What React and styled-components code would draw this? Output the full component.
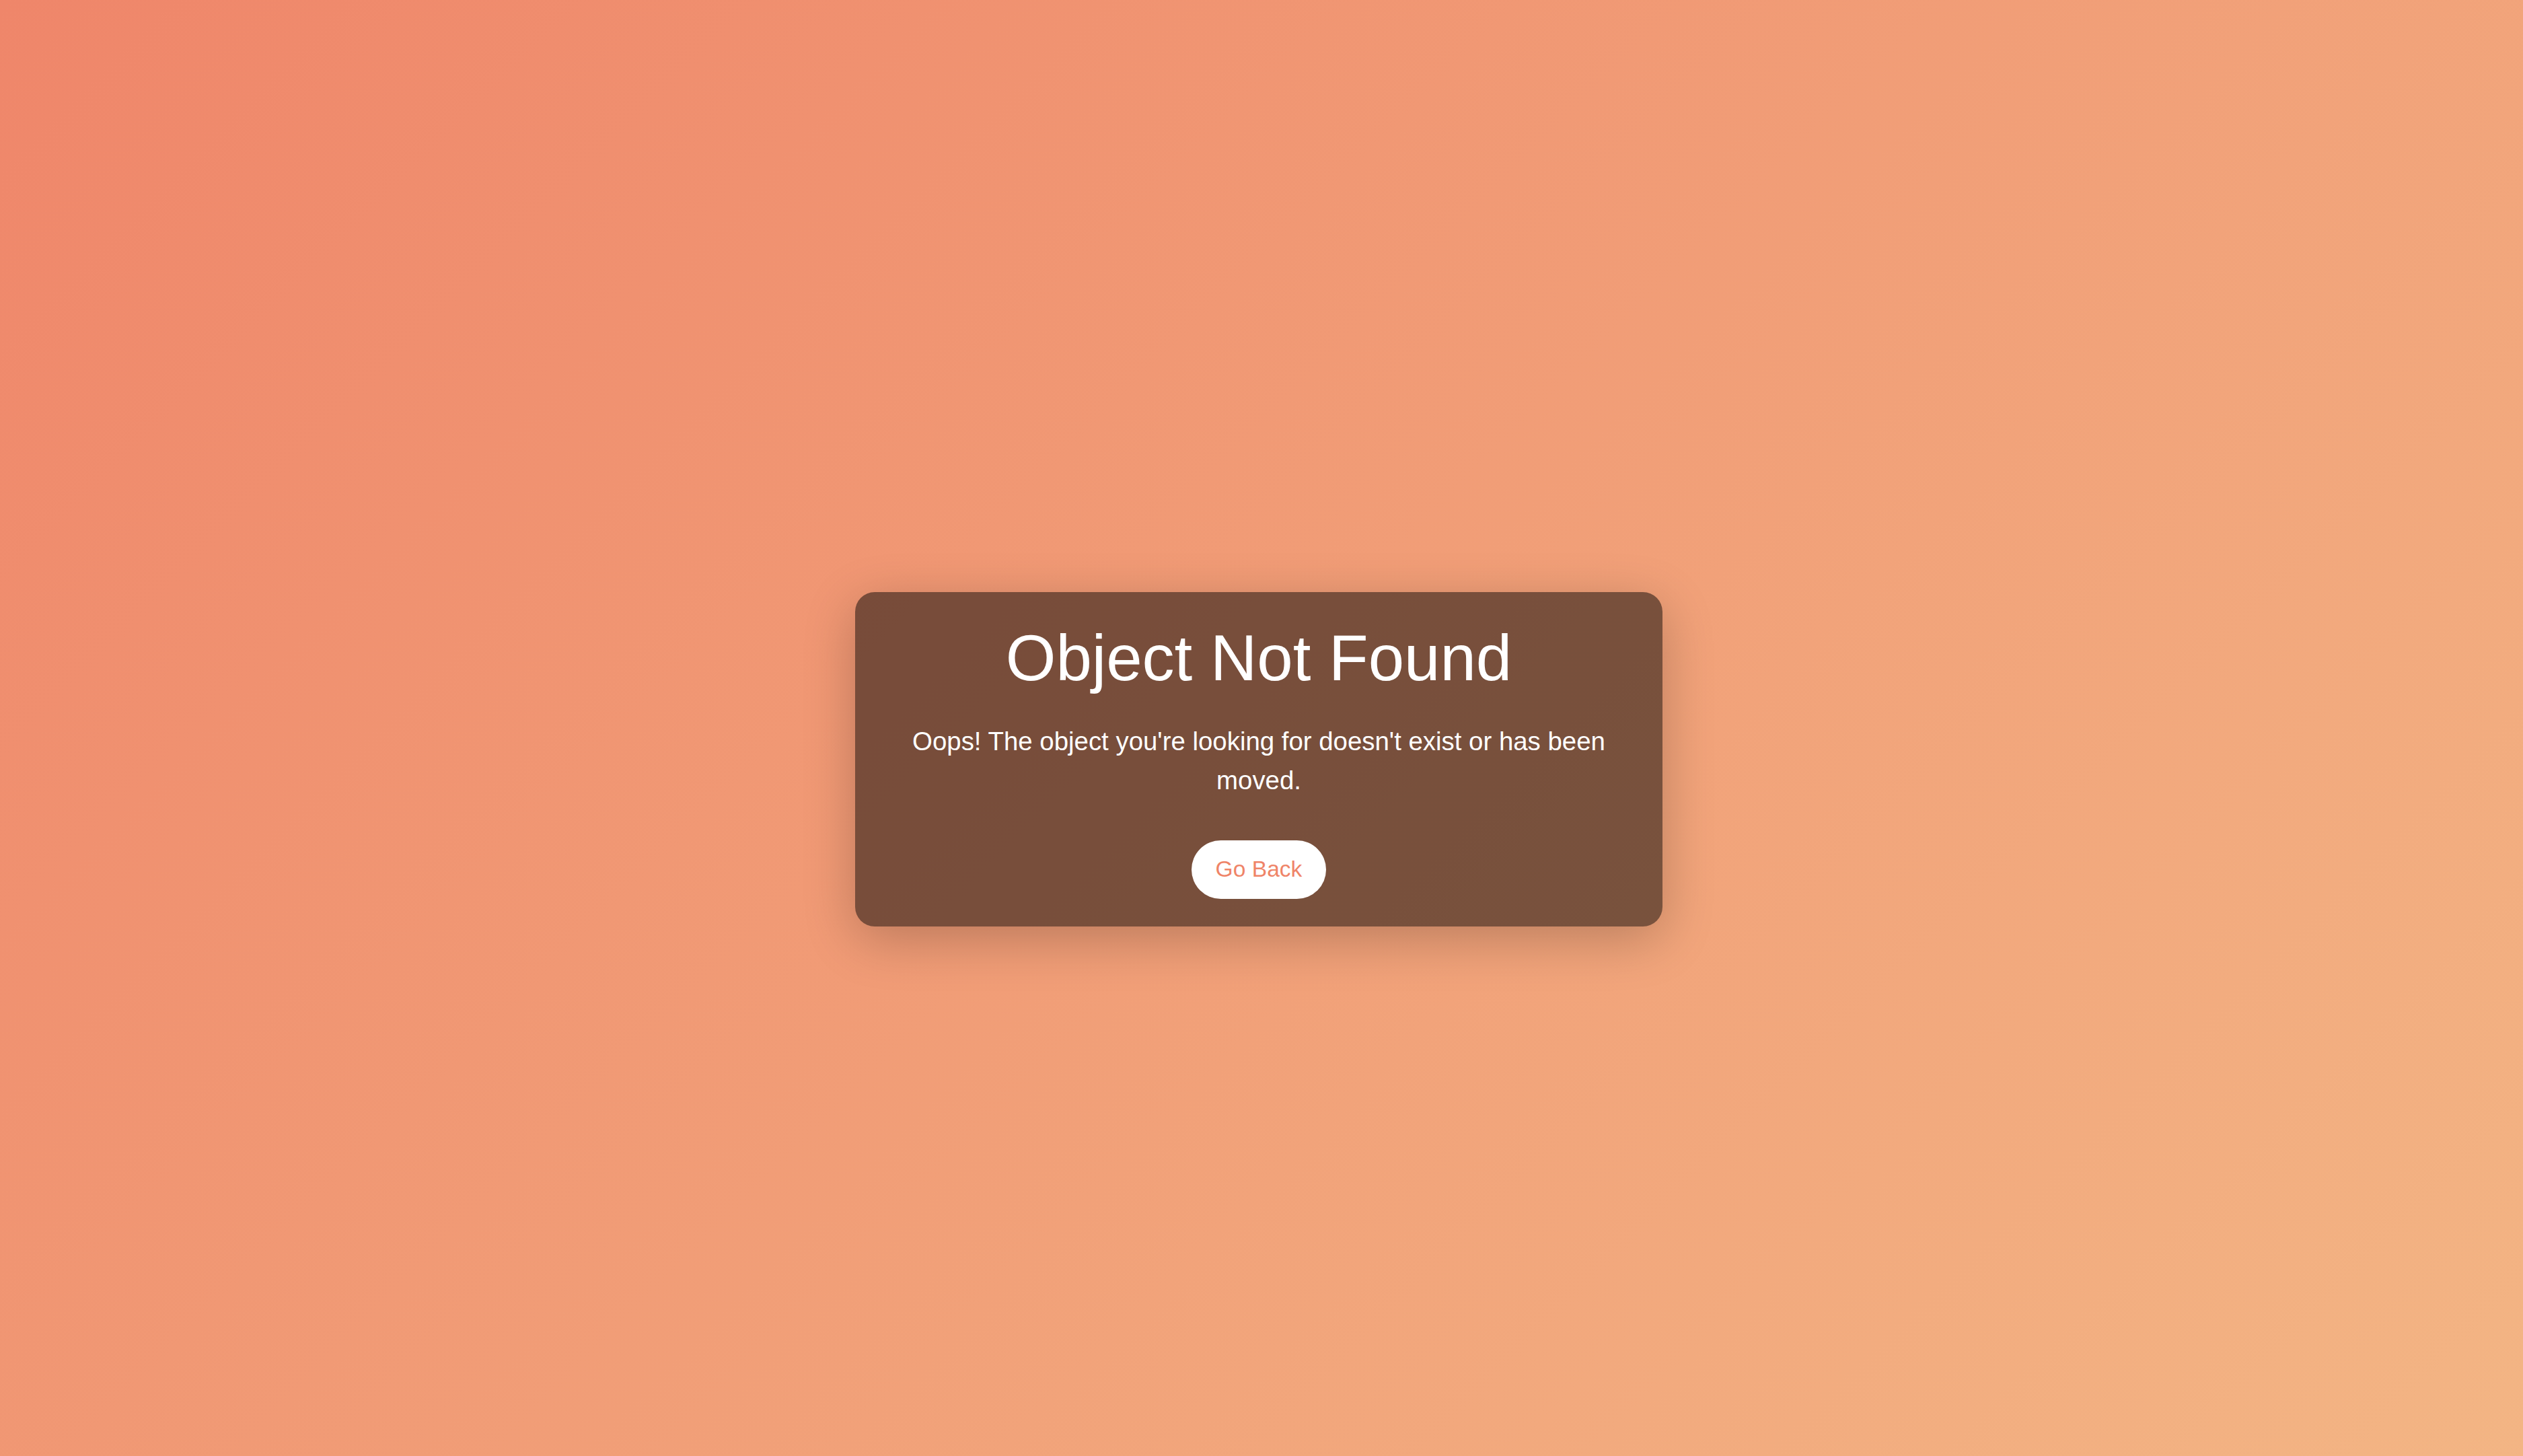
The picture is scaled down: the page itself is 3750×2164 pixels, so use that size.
import React from "react";
import styled, { createGlobalStyle } from "styled-components";

/* ================= GLOBAL ================= */

const GlobalStyle = createGlobalStyle`
  html, body {
    margin: 0;
    padding: 0;
  }
  body {
    font-family: "Liberation Sans", Arial, Helvetica, sans-serif;
  }
  * {
    box-sizing: border-box;
  }
`;

/* ================= LAYOUT ================= */

const Page = styled.main`
  min-height: 100vh;
  display: flex;
  justify-content: center;
  align-items: center;
  padding: 93px 8px 0 0;
  background: linear-gradient(135deg, #ef866a 0%, #f3b584 100%);
`;

const Card = styled.div`
  width: 1200px;
  padding: 43px 48px 41px 48px;
  border-radius: 29px;
  background: rgba(0, 0, 0, 0.5);
  box-shadow: 0 19px 77px rgba(0, 0, 0, 0.22);
  text-align: center;
  color: #ffffff;
`;

const Title = styled.h1`
  margin: 0 0 40px 0;
  font-size: 96px;
  font-weight: 400;
  line-height: 1.15;
`;

const Desc = styled.p`
  margin: 0 0 61px 0;
  font-size: 38.4px;
  line-height: 57.6px;
`;

const BackButton = styled.button`
  display: inline-block;
  padding: 24px 36px;
  border: none;
  border-radius: 48px;
  background: #ffffff;
  color: #ef8468;
  font-family: inherit;
  font-size: 33.6px;
  line-height: 38.6px;
  cursor: pointer;
  vertical-align: top;
`;

/* ================= COMPONENT ================= */

const App = () => {
  return (
    <>
      <GlobalStyle />
      <Page>
        <Card>
          <Title>Object Not Found</Title>
          <Desc>
            Oops! The object you're looking for doesn't exist or has been moved.
          </Desc>
          <BackButton onClick={() => window.history.back()}>Go Back</BackButton>
        </Card>
      </Page>
    </>
  );
};

export default App;
